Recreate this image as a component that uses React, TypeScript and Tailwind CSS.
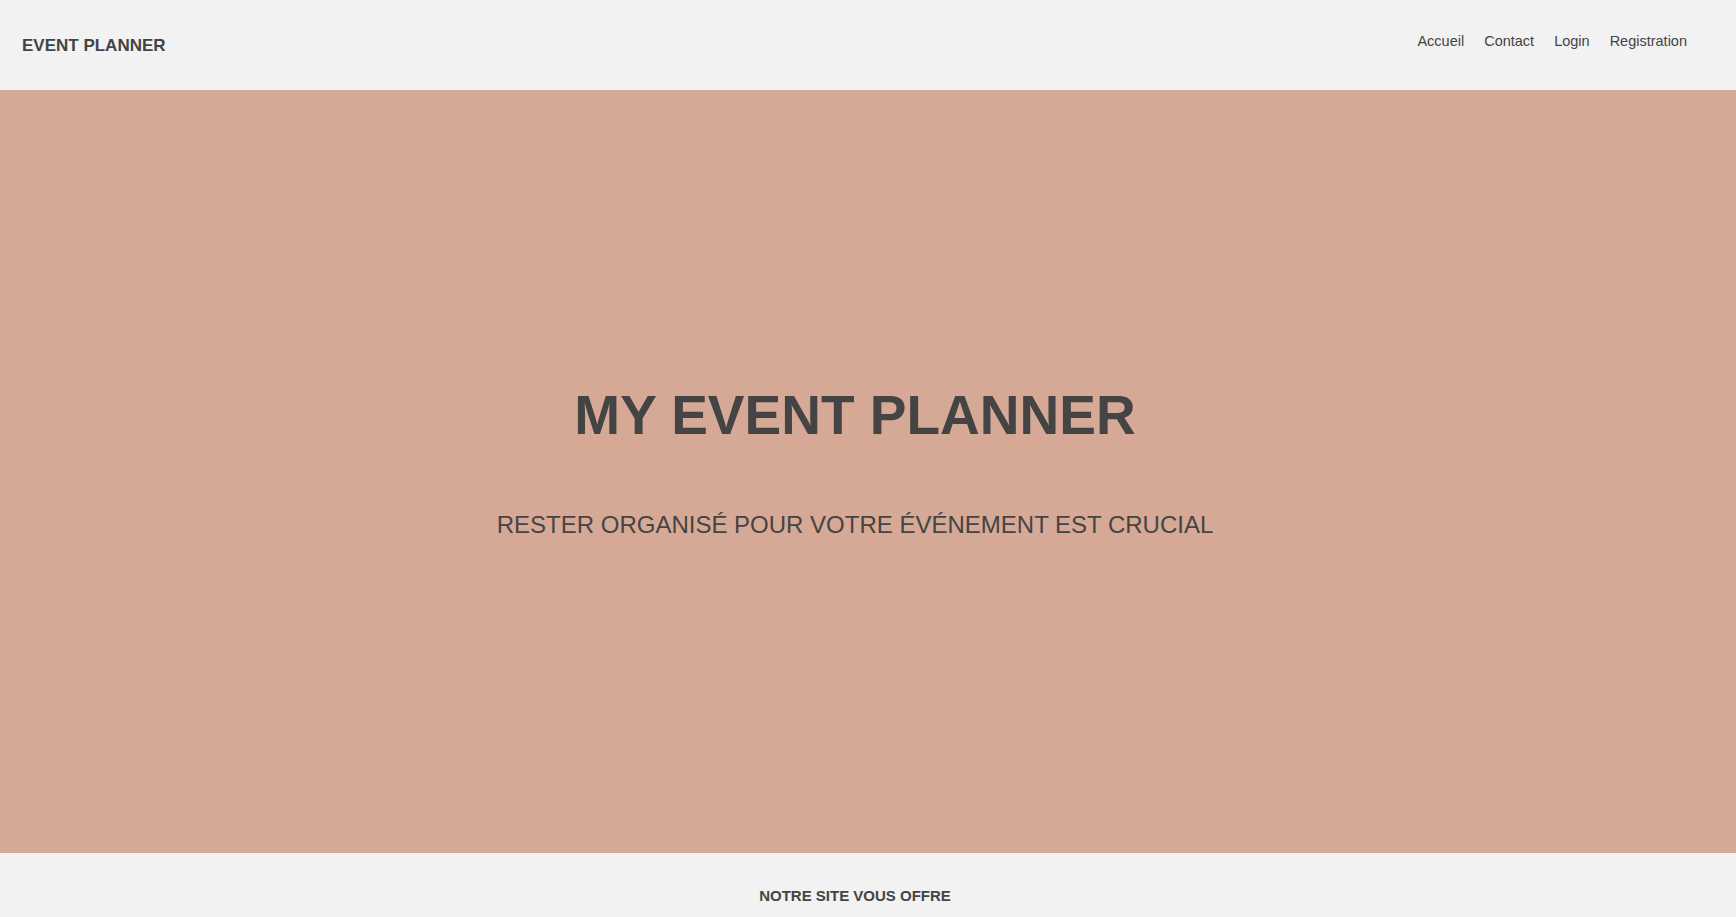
import React from 'react';

const navLinks = ['Accueil', 'Contact', 'Login', 'Registration'];

export default function App() {
  return (
    <div className="min-h-screen bg-[#f2f2f2] text-[#444444] font-['Liberation_Sans',Arial,sans-serif]">
      {/* Header */}
      <header className="h-[90px] bg-[#f2f2f2] pr-[26px]">
        <div className="flex justify-between items-start px-[22px]">
          <a href="#" className="pt-[36px] text-[17px] font-bold leading-[20px] text-[#444444]">
            EVENT PLANNER
          </a>
          <nav className="flex gap-[20px] pt-[33px] pr-[1px]">
            {navLinks.map((link) => (
              <a key={link} href="#" className="text-[14.5px] leading-[17px] text-[#444444]">
                {link}
              </a>
            ))}
          </nav>
        </div>
      </header>

      {/* Hero */}
      <section className="h-[763px] bg-[#d6a896] pr-[26px]">
        <div className="flex flex-col items-center pt-[293px] text-center">
          <h1 className="text-[55px] font-bold leading-[64px] text-[#444444]">MY EVENT PLANNER</h1>
          <p className="mt-[64px] text-[24px] leading-[28px] text-[#444444]">
            RESTER ORGANISÉ POUR VOTRE ÉVÉNEMENT EST CRUCIAL
          </p>
        </div>
      </section>

      {/* Offers */}
      <section className="bg-[#f2f2f2] pr-[26px] pt-[34px] pb-[40px]">
        <h2 className="text-center text-[15px] font-bold leading-[17px] text-[#444444]">NOTRE SITE VOUS OFFRE</h2>
      </section>
    </div>
  );
}
